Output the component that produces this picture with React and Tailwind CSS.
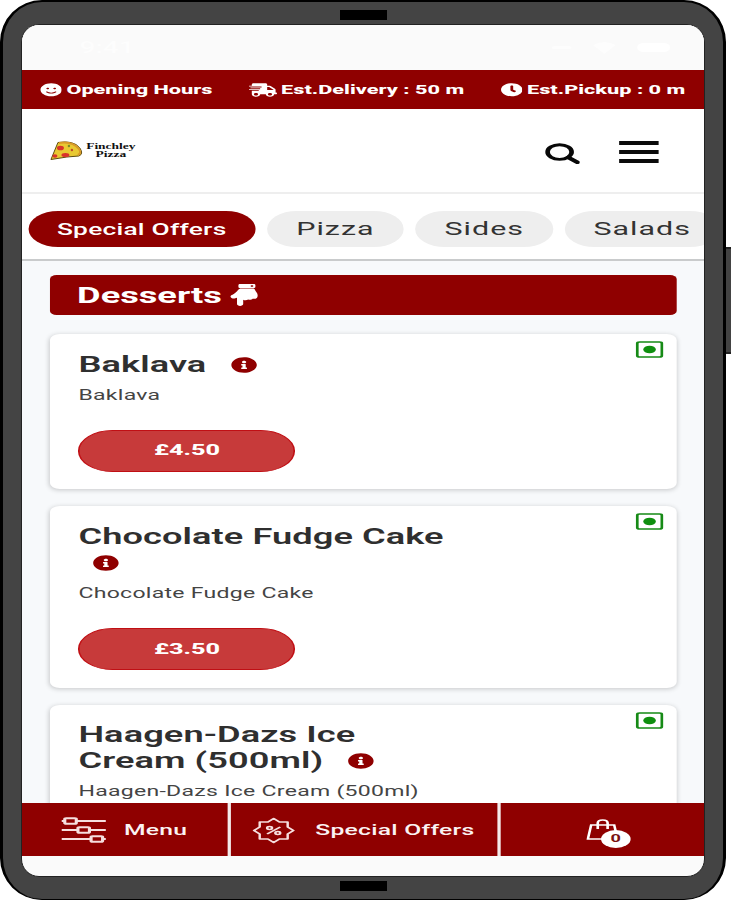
import { FaClock, FaHandPointDown, FaInfoCircle, FaShippingFast, FaSmile } from "react-icons/fa";

const categories = [
  { name: "Special Offers", active: true, className: "w-[138.5px] text-[16px] font-medium tracking-[0.15px]" },
  { name: "Pizza", className: "w-[83px] text-[18.5px] tracking-[0.6px]" },
  { name: "Sides", className: "w-[84px] text-[18.5px] tracking-[0.6px]" },
  { name: "Salads", className: "w-[94px] text-[18.5px] tracking-[0.6px]" },
];

const products = [
  { name: "Baklava", price: "£4.50" },
  { name: "Chocolate Fudge Cake", price: "£3.50" },
  { name: "Haagen-Dazs Ice Cream (500ml)" },
];

function StatusBar() {
  return (
    <div className="flex h-[45px] shrink-0 items-center justify-between bg-[#fafafa] pr-[21px] pl-[35px] text-white">
      <span className="text-[17px] font-medium opacity-60">9:41</span>
      <div className="flex items-center gap-[13px]">
        <span className="h-[3px] w-[12px] rounded bg-white opacity-60" />
        <svg className="h-[13px] w-[14px] opacity-60" viewBox="0 0 14 13" fill="currentColor">
          <path d="M0 4Q7-2 14 4L7 13Z" />
        </svg>
        <span className="h-[9px] w-[20px] rounded bg-white" />
      </div>
    </div>
  );
}

function InfoBar() {
  return (
    <div className="flex h-[39px] shrink-0 items-center bg-[#8f0000] pt-[1px] pl-[10.5px] text-[13.2px] font-extrabold whitespace-nowrap text-white">
      <div className="flex w-[127px] items-center gap-[3px]">
        <FaSmile className="size-[13.5px]" />
        <span>Opening Hours</span>
      </div>
      <div className="flex w-[153px] items-center gap-[3px]">
        <FaShippingFast className="h-[14px] w-[17px]" />
        <span>Est.Delivery : 50 m</span>
      </div>
      <div className="flex items-center gap-[3px]">
        <FaClock className="size-[13.5px]" />
        <span>Est.Pickup : 0 m</span>
      </div>
    </div>
  );
}

function Logo() {
  return (
    <div className="flex items-center gap-[2.5px]">
      <svg className="h-[20px] w-[20px]" viewBox="0 0 33 20" preserveAspectRatio="none">
        <path d="M1 18.5 8 1.5Q24-1 30 7Q34 13 29 15L17 16Z" fill="#e9c932" stroke="#5d4a12" strokeWidth="1" />
        <path d="M9 2Q23 0 29 8Q32 12 28 14" fill="none" stroke="#d99a28" strokeWidth="2" />
        <ellipse cx="10.500" cy="7" rx="3.500" ry="2.300" fill="#d8342a" />
        <ellipse cx="15.500" cy="14" rx="4" ry="2" fill="#d8342a" />
        <ellipse cx="5" cy="15" rx="2.500" ry="1.800" fill="#d8342a" />
        <circle cx="19" cy="5" r="1.200" fill="#7b8a28" />
        <circle cx="22" cy="9" r="1.200" fill="#c04a28" />
      </svg>
      <div className="text-center font-['Liberation_Serif',serif] text-[8.2px] leading-[8px] font-bold text-[#111]">
        <div>Finchley</div>
        <div>Pizza</div>
      </div>
    </div>
  );
}

function Header() {
  return (
    <header className="flex h-[85px] shrink-0 items-center justify-between border-b-2 border-[#eee] bg-white pr-[28px] pl-[16.5px]">
      <Logo />
      <div className="flex items-center gap-[24px] pt-[2px]">
        <svg className="mt-[4px] h-[22px] w-[21.5px]" viewBox="0 0 22 22" fill="none" stroke="#080808">
          <circle cx="9" cy="9" r="7.500" strokeWidth="2.900" />
          <path d="m14.500 14.500 5.500 5" strokeWidth="3.500" strokeLinecap="round" />
        </svg>
        <div className="mt-[1px] flex w-[24px] flex-col gap-[5px]">
          <span className="h-[4px] bg-[#0b0b0b]" />
          <span className="h-[4px] bg-[#0b0b0b]" />
          <span className="h-[4px] bg-[#0b0b0b]" />
        </div>
      </div>
    </header>
  );
}

function CategoryTabs() {
  return (
    <nav className="flex h-[67px] shrink-0 items-center gap-[7px] overflow-hidden border-b-2 border-[#c9cbcc] bg-white pt-[5px] pl-[3.5px]">
      {categories.map((category) => (
        <button
          key={category.name}
          className={`h-[36px] shrink-0 rounded-full pt-[2px] whitespace-nowrap ${category.className} ${
            category.active ? "bg-[#8f0000] text-white" : "bg-[#eee] text-[#333]"
          }`}
        >
          {category.name}
        </button>
      ))}
    </nav>
  );
}

function VegMark() {
  return (
    <svg className="absolute top-[7px] right-[8.4px] h-[17px] w-[17px]" viewBox="0 0 17 17">
      <rect x="1" y="1" width="15" height="15" rx="1.500" fill="none" stroke="#168a16" strokeWidth="1.700" />
      <circle cx="8.500" cy="8.500" r="3.800" fill="#0f8f0f" />
    </svg>
  );
}

function ProductCard({ product }) {
  return (
    <article className="relative shrink-0 rounded-[6px] bg-white px-[17.8px] pt-[17.7px] pb-[17.7px] shadow-[0_1px_4px_rgba(0,0,0,0.2)]">
      <VegMark />
      <h3 className="w-[235px] text-[22px] leading-[26px] font-semibold tracking-[0.05px] text-[#2f2f2f]">
        {product.name}{" "}
        <FaInfoCircle className="ml-[9.2px] inline size-[16px] align-[-1px] text-[#8f0000]" />
      </h3>
      <p className="mt-[7px] text-[14px] leading-[20px] tracking-[0.17px] text-[#444]">{product.name}</p>
      {product.price && (
        <button className="mt-[25px] block h-[42px] w-[132px] rounded-full border border-[#c00f14] bg-[#c73a3a] text-[15.3px] font-extrabold text-white">
          {product.price}
        </button>
      )}
    </article>
  );
}

function SlidersIcon() {
  return (
    <svg className="h-[26px] w-[27px]" viewBox="0 0 27 26" fill="none" stroke="#f6dede" strokeWidth="1.900">
      <path d="M0 4h2M9 4h18M0 13h10M17 13h10M0 22h18M25 22h2" />
      <rect x="2" y="1.300" width="7" height="5.400" rx="0.800" />
      <rect x="10" y="10.300" width="7" height="5.400" rx="0.800" />
      <rect x="18" y="19.300" width="7" height="5.400" rx="0.800" />
    </svg>
  );
}

function OfferIcon() {
  return (
    <svg className="h-[27px] w-[26px]" viewBox="0 0 26 26" fill="none" stroke="#f6dede" strokeWidth="1.500" strokeLinejoin="round">
      <path d="M13 1 16.500 4.500 21.500 4.500 21.500 9.500 25 13 21.500 16.500 21.500 21.500 16.500 21.500 13 25 9.500 21.500 4.500 21.500 4.500 16.500 1 13 4.500 9.500 4.500 4.500 9.500 4.500Z" />
      <path d="m9 16.500 8-7" />
      <circle cx="10.500" cy="10.500" r="1.500" />
      <circle cx="15.500" cy="15.500" r="1.500" />
    </svg>
  );
}

function BottomNav() {
  return (
    <nav className="flex h-[53px] shrink-0 gap-[2px] bg-[#f3eaea] text-[15px] font-medium tracking-[0.15px] whitespace-nowrap text-[#fbf3f3]">
      <div className="flex w-[124.5px] items-center gap-[10.7px] bg-[#8f0000] pt-[1px] pl-[24.300px]">
        <SlidersIcon />
        <span>Menu</span>
      </div>
      <div className="flex w-[162px] items-center gap-[12px] bg-[#8f0000] pt-[1px] pl-[13.8px]">
        <OfferIcon />
        <span>Special Offers</span>
      </div>
      <div className="flex flex-1 items-center justify-center bg-[#8f0000]">
        <div className="relative">
          <svg className="h-[22px] w-[20px]" viewBox="0 0 20 22" fill="none" stroke="#fff" strokeWidth="1.600">
            <path d="M3 6h14l2 14H1Z" />
            <path d="M7 10V4q0-3 3-3t3 3v6" />
          </svg>
          <span className="absolute top-[11.500px] left-[9.300px] flex h-[18px] w-[18px] items-center justify-center rounded-full bg-white text-[11px] leading-[14px] font-bold text-[#7a1010]">
            0
          </span>
        </div>
      </div>
    </nav>
  );
}

export default function App() {
  return (
    <div className="relative h-[900px] w-[731px] overflow-hidden bg-white font-[Roboto,sans-serif]">
      <span className="absolute top-[247px] left-[722px] h-[107px] w-[12px] rounded-[3px] border-2 border-[#222] bg-[#434343]" />
      <div className="relative h-[900px] w-[726px] overflow-hidden rounded-[42px] border-x-[3.500px] border-t-[2px] border-b border-black bg-[#444] pt-[22px] pl-[18px]">
        <span className="absolute top-[8px] left-[337px] h-[10px] w-[47px] bg-black" />
        <span className="absolute top-[879px] left-[337px] h-[10px] w-[47px] bg-black" />

        {/* the app is laid out 415px wide and stretched over the wide display */}
        <div className="h-[853px] w-[684px] overflow-hidden rounded-[18px] border border-[#222] bg-[#fafafa]">
          <div className="flex h-full w-[415px] origin-top-left scale-x-[1.645] flex-col">
            <StatusBar />
            <InfoBar />
            <Header />
            <CategoryTabs />
            <main className="flex h-[542px] shrink-0 flex-col gap-[17px] overflow-hidden bg-[#f7f9fb] pt-[14px] pr-[17px] pl-[16.5px]">
              <h2 className="mb-[2px] flex h-[40px] shrink-0 items-center gap-[2px] rounded-[4px] bg-[#8f0000] pl-[17px] text-[22px] font-bold text-white">
                Desserts
                <FaHandPointDown className="size-[22px]" />
              </h2>
              {products.map((product) => (
                <ProductCard key={product.name} product={product} />
              ))}
            </main>
            <BottomNav />
          </div>
        </div>
      </div>
    </div>
  );
}
